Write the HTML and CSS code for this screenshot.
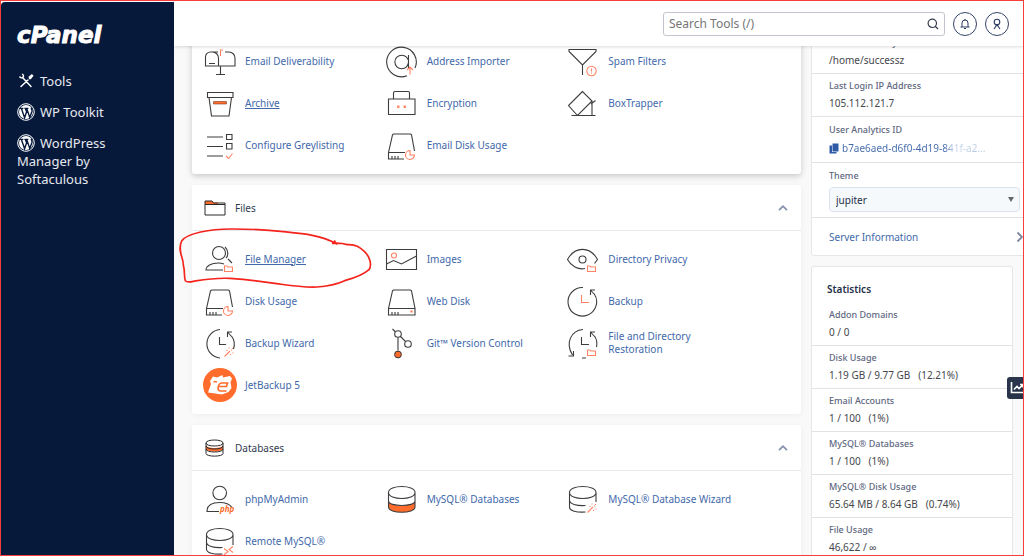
FILE: index.html
```html
<!DOCTYPE html>
<html lang="en">
<head>
<meta charset="utf-8">
<title>cPanel - Tools</title>
<link rel="stylesheet" href="styles.css">
</head>
<body>
<svg class="defs" aria-hidden="true">
  <symbol id="wp" viewBox="0 0 18 18">
    <circle cx="9" cy="9" r="8.3" fill="none" stroke="#fff" stroke-width="1"/>
    <circle cx="9" cy="9" r="7" fill="#fff"/>
    <path d="M2.8 5.4h3.6M4.4 5.6l3.2 9.2 2-6L8.3 5.6M7.4 5.4h4M9.8 5.6l3 9 2.2-6.4c.3-1.400-.8-2-.8-3.400" fill="none" stroke="#06193b" stroke-width="1.4"/>
  </symbol>
  <symbol id="disk" viewBox="0 0 34 34">
    <path class="k" d="M3.500 24.500 7.500 7q.3-1 1.500-1h16q1.200 0 1.500 1l3 16M3.500 24.500H20M3.500 24.500V31H19M7 31v-3M10 31v-3M13 31v-3"/>
    <path class="o" d="M25 22.500a4.500 4.500 0 1 0 4.500 4.500H25z"/>
  </symbol>
  <symbol id="folder" viewBox="0 0 10 8">
    <path class="o" d="M1 7V1.500h2.500l.8 1H9V7z"/>
  </symbol>
  <symbol id="wand" viewBox="0 0 10 10">
    <path class="o" d="M.5 9.500 6 4M5 .5v1M8.500 1v1M7 3h1M9 5.500v1M6.500 7v1M3 3v1"/>
  </symbol>
  <symbol id="up" viewBox="0 0 12 8"><path d="M2 6.200 6 2.200l4 4" fill="none" stroke="#8591ab" stroke-width="1.800"/></symbol>
</svg>
<div class="app">
  <nav class="sidebar">
    <a class="logo" href="#">cPanel</a>
    <a class="nav" href="#"><svg viewBox="0 0 18 18"><path d="M5.500 5.500 14 14.500M4 14.500 11 8M12.500 6.500l2-2" fill="none" stroke="#fff" stroke-width="1.500" stroke-linecap="round"/><path d="M2.500 4.500c1 1.500 2.500 1.800 3.500.8s.5-2.500-1-3.300M12.300 5l2.500-2 .8.800-2 2.600z" fill="none" stroke="#fff" stroke-width="1.400"/></svg>Tools</a>
    <a class="nav" href="#"><svg><use href="#wp"/></svg>WP Toolkit</a>
    <a class="nav" href="#"><svg><use href="#wp"/></svg>WordPress Manager by Softaculous</a>
  </nav>
  <div class="page">
    <header class="topbar">
      <div class="search">
        <input type="text" placeholder="Search Tools (/)" aria-label="Search Tools">
        <button class="find" aria-label="Search"><svg viewBox="0 0 12 12"><path d="M8.500 8.500 11 11M9.500 5.300a4.200 4.200 0 1 1-8.400 0 4.200 4.200 0 0 1 8.400 0z" fill="none" stroke="#333b4d" stroke-width="1.200"/></svg></button>
      </div>
      <button class="round" aria-label="Notifications"><svg viewBox="0 0 12 12"><path d="M1.500 9h9M3 9V5a3 3 0 0 1 6 0v4M5 10.500h2M6 1v1" fill="none" stroke="#2b3a63" stroke-width="1"/></svg></button>
      <button class="round" aria-label="Account"><svg viewBox="0 0 12 12"><path d="M8.800 4a2.800 2.800 0 1 1-5.600 0 2.800 2.800 0 0 1 5.600 0zM3 11l3-4.200L9 11" fill="none" stroke="#2b3a63" stroke-width="1.100"/></svg></button>
    </header>
    <div class="content">
      <main class="groups">
        <section class="card first">
          <div class="tools">
            <a class="tool" href="#"><svg viewBox="0 0 34 34"><path class="k" d="M2.500 22V13a5 5 0 0 1 5-5h2a6 6 0 0 1 6 6v8zM22 8h4a6 6 0 0 1 6 6v8H15.500M17.500 22v8.500M13 30.500h9M6 19.500h6M9 8h6"/><path class="o" d="M17.500 12V6H20"/></svg>Email Deliverability</a>
            <a class="tool" href="#"><svg viewBox="0 0 34 34"><path class="k" d="M22 31.700A14.800 14.800 0 1 1 30 24M23.500 18a6.800 6.800 0 1 1-13.600 0 6.800 6.800 0 0 1 13.600 0zM23.500 11v13"/><path class="o" d="M25 30.500v-7M22 26l3-3 3 3"/></svg>Address Importer</a>
            <a class="tool" href="#"><svg viewBox="0 0 34 34"><path class="k" d="M3 5.500h27v2L16.500 21 3 7.500zM16.500 21v10"/><circle class="o" cx="25.500" cy="27" r="4.700"/><path class="o" d="M25.500 24.500v3M25.500 28.500v1"/></svg>Spam Filters</a>
            <a class="tool on" href="#"><svg viewBox="0 0 34 34"><path class="k" d="M4.500 6.500H30v5H4.500zM6 11.500 8.500 30h17.500L28.500 11.500"/><path d="M10.500 15.500h13V18h-13z" fill="#ff6c2c" stroke="#7a3a20" stroke-width=".6"/></svg><span>Archive</span></a>
            <a class="tool" href="#"><svg viewBox="0 0 34 34"><path class="k" d="M3.500 13H30v15.500H3.500zM8.500 13V7q0-1.500 1.500-1.500h13q1.500 0 1.500 1.500v6"/><path d="M12 19.500h2.500V22H12zM18.500 19.500H21V22h-2.500z" fill="#ff8a66"/></svg>Encryption</a>
            <a class="tool" href="#"><svg viewBox="0 0 34 34"><path class="k" d="M16.500 5.500 2.500 19.500l9 10L26 15zM26 15v14.500M5.500 29.500h24M25 18l4.500-3.500"/></svg>BoxTrapper</a>
            <a class="tool" href="#"><svg viewBox="0 0 34 34"><path class="k" d="M4 9h16M4 18.500h16M4 28h16M23.500 6.500h5.500v5h-5.500zM23.500 15.500h5.500v5.500h-5.500z"/><path class="o" d="M23 28l2.500 2.500 4-5"/></svg>Configure Greylisting</a>
            <a class="tool" href="#"><svg><use href="#disk"/></svg>Email Disk Usage</a>
          </div>
        </section>

        <section class="card">
          <h2 class="head"><svg class="fi" viewBox="0 0 22 16"><path d="M1 4V1h7l1.500 1.500H14V4z" fill="#ff6c2c"/><path d="M1 15V1h7l1.500 2H21v12zM1 4.500h20" fill="none" stroke="#2b2b2b"/></svg>Files<button class="fold" aria-label="Collapse Files"><svg><use href="#up"/></svg></button></h2>
          <div class="tools">
            <div class="marked">
              <a class="tool on" href="#"><svg viewBox="0 0 34 34"><path class="k" d="M22.500 11a6.500 6.500 0 1 1-13 0 6.500 6.500 0 0 1 13 0zM22 5c3.500 3 3.500 9 1 11M25 17l4 4M20 28H3c0-4 5-7 12.500-7 2 0 4 .5 5.500 1"/><use href="#folder" x="20.500" y="22.500" width="10" height="8"/></svg><span>File Manager</span></a>
              <svg class="loop" viewBox="0 0 660 360"><path d="M493 181l4 9C450 165 400 161 340 155 290 149 240 147 190 147 120 146 50 160 35 183 21 212 42 236 40 256 46 275 41 290 46 302c4 5 14 4 24 2 30-5 60-11 110-9 70 5 90 8 140 16 50 7 80 12 120 10 40-3 60-8 84-19 30-8 54-16 73-33 10-15 2-40-14-55-14-12-26-22-51-20-16-5-30-5-46-4"/></svg>
            </div>
            <a class="tool" href="#"><svg viewBox="0 0 34 34"><path class="k" d="M1.500 7.500h30v20h-30zM1.500 22l7-3.500 8 3.500 15-8"/><circle class="o" cx="9" cy="13.500" r="2.500"/></svg>Images</a>
            <a class="tool" href="#"><svg viewBox="0 0 34 34"><path class="k" d="M19 26.500C12 28 5 24 1.500 17.500 9 4 24 4 31.500 17.500l-3 4"/><circle class="k" cx="16.500" cy="17.500" r="3.500"/><use href="#folder" x="20.500" y="22.500" width="10" height="8"/></svg>Directory Privacy</a>
            <a class="tool" href="#"><svg><use href="#disk"/></svg>Disk Usage</a>
            <a class="tool" href="#"><svg viewBox="0 0 34 34"><path class="k" d="M3.500 24.500 7.500 7q.3-1 1.500-1h16q1.200 0 1.500 1l3.500 17.500zM3.500 24.500V31H30V24.500M7 31v-3M10 31v-3M13 31v-3"/><path d="M25.500 26.500h2v2h-2z" fill="#ff6c4c"/></svg>Web Disk</a>
            <a class="tool" href="#"><svg viewBox="0 0 34 34"><path class="k" d="M17 3.500a14.300 14.300 0 1 0 11 6M24.500 11V6H29M24.500 6l4.500 5"/><path class="o" d="M15.500 11v7.500H23"/></svg>Backup</a>
            <a class="tool" href="#"><svg viewBox="0 0 34 34"><path class="k" d="M17 3.500a14.300 14.300 0 0 0 0 28.500M30.500 23a14 14 0 0 0-2-13M24.500 11V6H29M24.500 6l4.500 5M16.500 11v7.500H23"/><use href="#wand" x="21" y="21" width="10" height="10"/></svg>Backup Wizard</a>
            <a class="tool" href="#"><svg viewBox="0 0 34 34"><path class="k" d="M7.500 3l3 3M13 11.500v13M15.500 10.500l5 5"/><circle class="k" cx="13" cy="8" r="3.300"/><circle class="k" cx="23" cy="18" r="3.300"/><circle cx="13" cy="28.500" r="3.400" fill="#ff6c2c" stroke="#333"/></svg>Git™ Version Control</a>
            <a class="tool" href="#"><svg viewBox="0 0 34 34"><path class="k" d="M17 3.500C5 4.500-1 17 6.500 29M7.500 25v5h-5M16 32h4M30.500 21a14 14 0 0 0-2-11M24.500 11V6H29M24.500 6l4.500 5M15.500 11v7.500H23"/><use href="#folder" x="20.500" y="22.500" width="10" height="8"/></svg>File and Directory Restoration</a>
            <a class="tool" href="#"><svg viewBox="0 0 34 34"><circle cx="17" cy="17" r="17" fill="#ff6c2c"/><path d="M5 24.500 8 16l-1-3 3-4.500 4 1L19.500 7l.5 2.500L27 8l2 2.500-1.500 4 1 5.500-3 4-6.500 2.500z" fill="#fff"/><path d="M10.500 13.500l3.500.5M15.500 18.500h8l1-3.500h-5.500q-3 0-3.800 4-.7 4 2.800 4h5.500" fill="none" stroke="#ff6c2c" stroke-width="1.700"/></svg>JetBackup 5</a>
          </div>
        </section>

        <section class="card">
          <h2 class="head"><svg class="fi" viewBox="0 0 22 18"><path d="M2 6c0 4 17 4 17 0v3.500c0 4-17 4-17 0z" fill="#ff6c2c"/><path d="M2 4c0-4 17-4 17 0S2 8 2 4zM2 4v10.500c0 3.500 17 3.500 17 0V4M2 7c0 4 17 4 17 0M2 10c0 4 17 4 17 0" fill="none" stroke="#2b2b2b"/></svg>Databases<button class="fold" aria-label="Collapse Databases"><svg><use href="#up"/></svg></button></h2>
          <div class="tools">
            <a class="tool" href="#"><svg viewBox="0 0 34 34"><path class="k" d="M23.500 11a6.800 6.800 0 1 1-13.600 0 6.800 6.800 0 0 1 13.600 0zM16 29.500H4c0-6 5-9 12.500-9 6 0 10.500 2 12.500 5"/><text x="17" y="30" class="php">php</text></svg>phpMyAdmin</a>
            <a class="tool" href="#"><svg viewBox="0 0 34 34"><path d="M3.500 19c0 6 26.500 6 26.500 0v6c0 7-26.500 7-26.500 0z" fill="#ff6c2c"/><path class="k" d="M3.500 10.500c0-8 26.500-8 26.500 0s-26.500 8-26.500 0zM3.500 10.500V25c0 7 26.500 7 26.500 0V10.500M3.500 19c0 6 26.500 6 26.500 0"/></svg>MySQL® Databases</a>
            <a class="tool" href="#"><svg viewBox="0 0 34 34"><path class="k" d="M3.500 10.500c0-8 26.500-8 26.500 0s-26.500 8-26.500 0zM3.500 10.500V25c0 4 7 5.500 16 5M30 10.500V20M3.500 18c0 4 7 6 16 5.500"/><use href="#wand" x="21" y="21" width="10" height="10"/></svg>MySQL® Database Wizard</a>
            <a class="tool" href="#"><svg viewBox="0 0 34 34"><path class="k" d="M3.500 10.500c0-8 26.500-8 26.500 0s-26.500 8-26.500 0zM3.500 10.500V25c0 4 7 5.500 16 5M30 10.500V21M3.500 18c0 4 7 6 16 5.500"/><path class="o" d="M21 24.500l4 3-4 3.500M30 22.500l-4 3 4 3"/></svg>Remote MySQL®</a>
          </div>
        </section>
      </main>

      <aside class="side">
        <section class="panel info">
          <dl>
            <div class="row"><dt>Home Directory</dt><dd>/home/successz</dd></div>
            <div class="row"><dt>Last Login IP Address</dt><dd>105.112.121.7</dd></div>
            <div class="row tall"><dt>User Analytics ID</dt><dd><a class="uid" href="#"><svg viewBox="0 0 10 11"><path d="M3.500.5h6v8h-6z" fill="#2d5ba5"/><path d="M.5 2.500h2.500v6.500h4.500v1.500h-7z" fill="#2d5ba5"/></svg><span>b7ae6aed-d6f0-4d19-841f-a2...</span></a></dd></div>
          </dl>
          <div class="theme">
            <label for="theme">Theme</label>
            <div class="pick"><select id="theme"><option>jupiter</option></select></div>
          </div>
          <a class="server" href="#">Server Information<svg viewBox="0 0 8 12"><path d="M1.500 1.500 6 6l-4.500 4.500" fill="none" stroke="#7d89a5" stroke-width="1.800"/></svg></a>
        </section>
        <section class="panel stats">
          <h2>Statistics</h2>
          <dl>
            <div class="row"><dt>Addon Domains</dt><dd>0 / 0</dd></div>
            <div class="row"><dt>Disk Usage</dt><dd>1.19 GB / 9.77 GB &nbsp; (12.21%)</dd></div>
            <div class="row"><dt>Email Accounts</dt><dd>1 / 100 &nbsp; (1%)</dd></div>
            <div class="row"><dt>MySQL® Databases</dt><dd>1 / 100 &nbsp; (1%)</dd></div>
            <div class="row"><dt>MySQL® Disk Usage</dt><dd>65.64 MB / 8.64 GB &nbsp; (0.74%)</dd></div>
            <div class="row"><dt>File Usage</dt><dd>46,622 / ∞</dd></div>
          </dl>
        </section>
      </aside>
    </div>
  </div>
  <button class="chart" aria-label="Statistics chart"><svg viewBox="0 0 14 12"><path d="M1.500 0v10.500H14M4 7.500 7 4.500l2 2 3.500-3.500M10 2.500h3v3" fill="none" stroke="#fff" stroke-width="1.600"/></svg></button>
</div>
</body>
</html>
```

FILE: styles.css
```css
* { box-sizing: border-box; }
body { margin: 0; font: 10px/16px "Noto Sans", sans-serif; color: #45474d; background: #f9f9f9; }
a { color: #4269ab; text-decoration: none; }
h2, dl, dd { margin: 0; }
button { padding: 0; border: 0; background: none; }
.defs { position: absolute; width: 0; height: 0; }
.k { fill: none; stroke: #3d3d3f; stroke-width: 1.1; }
.o { fill: none; stroke: #ff8262; stroke-width: 1.1; }
.php { font: italic bold 8px "Noto Sans", sans-serif; fill: #ff6c2c; }

.app { position: relative; display: flex; height: 100vh; overflow: hidden; border: 1px solid #f93c3c; }

.sidebar { flex: none; width: 173px; margin-top: 1px; padding: 20px 16px; background: #06193b; border-radius: 4px 0 0 0; }
.logo { display: block; margin-bottom: 24px; font: italic bold 23px/26px "DejaVu Sans", sans-serif; color: #fff; -webkit-text-stroke: 1px #fff; }
.nav { display: block; margin-bottom: 13px; font-size: 13px; line-height: 18px; color: #e6e9ef; }
.nav svg { width: 18px; height: 18px; margin-right: 5px; vertical-align: top; }

.page { flex: 1; min-width: 0; }
.topbar { position: relative; z-index: 3; display: flex; justify-content: flex-end; align-items: center; gap: 8px; height: 45px; padding: 0 14px; background: #fff; box-shadow: 0 1px 3px rgba(0, 0, 0, .14); }
.search { display: flex; width: 282px; height: 24px; border: 1px solid #c3c5cc; border-radius: 3px; }
.search input { flex: 1; min-width: 0; padding: 0 5px; border: 0; background: none; font: 12px "Noto Sans", sans-serif; outline: 0; }
.search input::placeholder { color: #757575; opacity: 1; }
.find { width: 22px; }
.find svg { display: block; width: 12px; height: 12px; margin: auto; }
.round { width: 24px; height: 24px; border: 1px solid #35436b; border-radius: 50%; }
.round svg { display: block; width: 12px; height: 12px; margin: auto; }

.content { display: flex; gap: 10px; margin-top: -45px; padding-left: 18px; }
.groups { flex: 1; min-width: 0; display: flex; flex-direction: column; gap: 11px; }
.card { background: #fff; border-radius: 3px; box-shadow: 0 1px 6px rgba(0, 0, 0, .05); }
.first { padding-top: 32px; box-shadow: 0 2px 6px rgba(0, 0, 0, .2); }
.head { display: flex; align-items: center; gap: 9px; height: 46px; padding: 0 12px; border-bottom: 1px solid #e6e8ee; font-size: 10px; font-weight: 400; color: #303a50; }
.fi { width: 22px; height: 18px; }
.fold { margin-left: auto; }
.fold svg { display: block; width: 12px; height: 8px; }
.tools { display: grid; grid-template-columns: repeat(3, 1fr); grid-auto-rows: 42px; padding: 7px 53px 8px 11px; }
.tool { display: flex; align-items: center; gap: 8px; height: 42px; padding-right: 5px; line-height: 13px; }
.tool svg { flex: none; width: 34px; height: 34px; }
.on span { text-decoration: underline; }
.marked { position: relative; }
.loop { position: absolute; z-index: 2; left: -33px; top: -58px; width: 220px; height: 120px; fill: none; stroke: #f4231c; stroke-width: 5; pointer-events: none; }

.side { flex: none; width: 212px; display: flex; flex-direction: column; gap: 10px; }
.panel { background: #fff; border: 1px solid #e6e6e8; border-radius: 3px; }
.row { padding: 4px 17px; border-bottom: 1px solid #e2e2e4; }
dt, .theme label { display: block; font-size: 9px; font-weight: 500; line-height: 16px; color: #5e6780; }
dd { line-height: 18px; white-space: nowrap; }
.info { margin-right: -6px; padding-top: 29px; }
.tall { padding: 5px 17px 4px; }
.tall dd { line-height: 20px; }
.uid { display: flex; align-items: center; gap: 3px; }
.uid svg { width: 10px; height: 11px; }
.uid span { background: linear-gradient(90deg, #4269ab 72%, #c5d5ea 78%, #b5c8e2); background-clip: text; -webkit-background-clip: text; color: transparent; }
.theme { padding: 5px 8px 5px 17px; border-bottom: 1px solid #e2e2e4; }
.pick { position: relative; margin-top: 3px; }
.pick::after { content: ""; position: absolute; right: 6px; top: 10px; border: 3px solid transparent; border-top: 5px solid #666; pointer-events: none; }
select { appearance: none; display: block; width: 100%; height: 25px; padding: 0 6px; border: 1px solid #dde3ee; border-radius: 4px; background: #f6f9fc; font: 10px "Noto Sans", sans-serif; color: #252f48; }
.server { display: flex; align-items: center; justify-content: space-between; height: 37px; padding: 0 4px 0 17px; }
.server svg { width: 8px; height: 12px; }
.stats { margin-right: 10px; }
.stats h2 { padding: 14px 15px 6px; font-size: 10px; font-weight: 600; line-height: 16px; color: #252f48; }

.chart { position: absolute; right: 0; top: 376px; width: 16px; height: 22px; padding-left: 3px; border-radius: 3px 0 0 3px; background: #293349; overflow: hidden; }
.chart svg { display: block; width: 14px; height: 12px; }
```
